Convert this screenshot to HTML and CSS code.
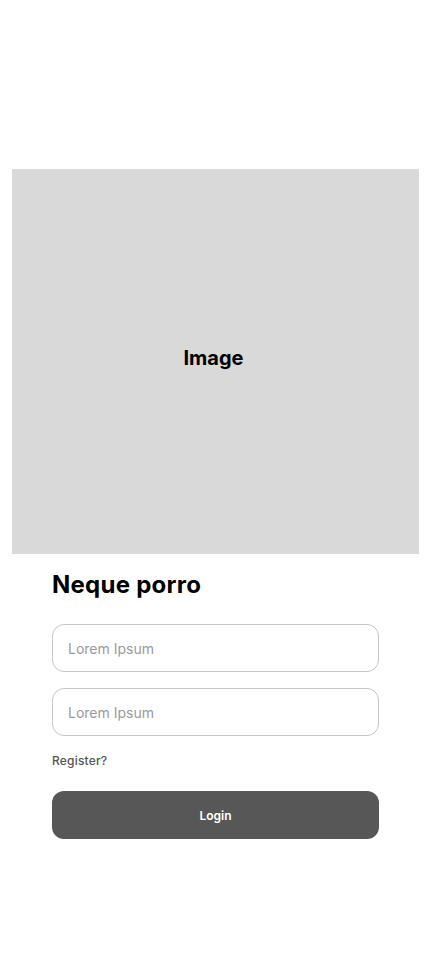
FILE: index.html
```html
<!DOCTYPE html>
<html lang="en">
<head>
<meta charset="utf-8">
<title>Login</title>
<link rel="stylesheet" href="styles.css">
</head>
<body>
<main class="page">
  <div class="hero">Image</div>
  <form class="form">
    <h1 class="title">Neque porro</h1>
    <input class="field" type="text" placeholder="Lorem Ipsum">
    <input class="field field-second" type="password" placeholder="Lorem Ipsum">
    <a class="register" href="#">Register?</a>
    <button class="login" type="button">Login</button>
  </form>
</main>
</body>
</html>
```

FILE: styles.css
```css
* { box-sizing: border-box; }
html, body { margin: 0; padding: 0; background: #ffffff; }
body { font-family: Inter, "Noto Sans", "Liberation Sans", sans-serif; color: #000; }
.page { display: flex; flex-direction: column; padding-top: 169px; }
.hero {
  margin-left: 12px;
  width: 407px;
  height: 385px;
  padding: 0 4px 8px 0;
  background: #d9d9d9;
  display: flex;
  align-items: center;
  justify-content: center;
  font-size: 20px;
  font-weight: 700;
  color: #000;
}
.form {
  display: flex;
  flex-direction: column;
  margin-left: 52px;
  width: 327px;
}
.title {
  margin: 16px 0 0;
  font-size: 24px;
  line-height: 29px;
  font-weight: 700;
  letter-spacing: 0.25px;
}
.field {
  margin-top: 25px;
  height: 48px;
  border: 1px solid #c6c6ca;
  border-radius: 12px;
  padding: 0 15px;
  font-family: inherit;
  font-size: 14px;
  color: #333;
  background: #fff;
  outline: none;
}
.field::placeholder { color: #9a9aa0; }
.field-second { margin-top: 16px; }
.register {
  margin-top: 17px;
  font-size: 12px;
  line-height: 15px;
  font-weight: 500;
  letter-spacing: 0.2px;
  color: #555555;
  text-decoration: none;
  align-self: flex-start;
}
.login {
  margin-top: 23px;
  height: 48px;
  border: none;
  border-radius: 12px;
  background: #575757;
  color: #ffffff;
  font-family: inherit;
  font-size: 12px;
  font-weight: 600;
}
```
